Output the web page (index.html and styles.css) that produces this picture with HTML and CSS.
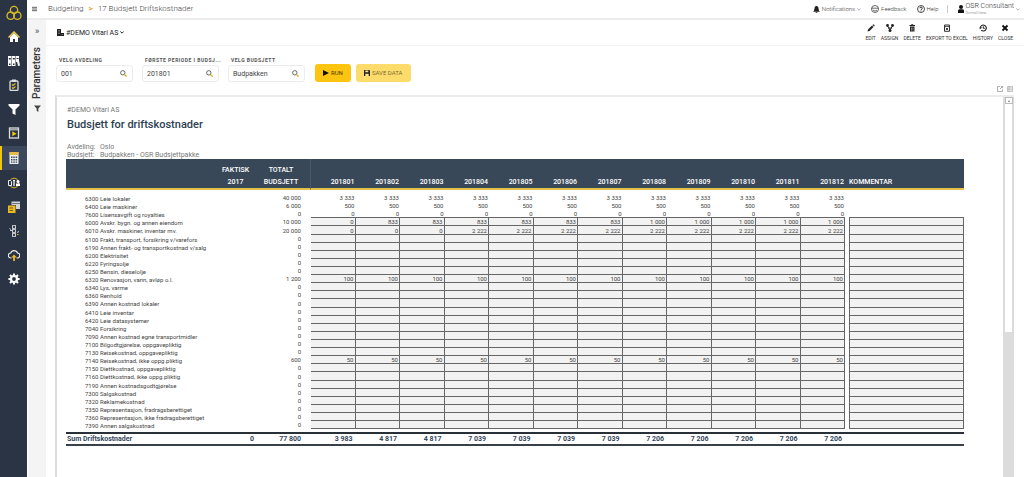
FILE: index.html
```html
<!DOCTYPE html>
<html lang="no">
<head>
<meta charset="utf-8">
<title>Budsjett for driftskostnader</title>
<link rel="stylesheet" href="styles.css">
</head>
<body>
<div class="app">
  <nav class="rail" aria-label="Main">
    <a class="rail-logo" href="#" aria-label="Start"><svg viewBox="0 0 24 24" width="16" height="16" fill="none" stroke="#d5b929" stroke-width="2"><circle cx="12" cy="7.500" r="5.500"/><circle cx="7" cy="16" r="5.500"/><circle cx="17" cy="16" r="5.500"/></svg></a>
    <a class="rail-item" href="#" aria-label="Home"><svg viewBox="0 0 12 12" width="12" height="12"><path d="M2 6l4-4 4 4v5H7V8H5v3H2z" fill="#fff"/><path d="M.5 6.500L6 1l5.500 5.500" fill="none" stroke="#f2c94c" stroke-width="1.500"/></svg></a>
    <a class="rail-item" href="#" aria-label="Archive"><svg viewBox="0 0 12 12" width="12" height="12" fill="#fff"><path d="M0 1h3.500v10H0zM4 1h3.500v10H4z"/><path d="M8 1.500l2-.5 2 9.500-2 .5z"/><path d="M8 1h3v6H8z"/><path d="M.8 3h2v1.500h-2zM4.800 3h2v1.500h-2zM8.500 3h2v1h-2zM1 8.500h1.500V10H1zM5 8.500h1.500V10H5z" fill="#2b3445"/></svg></a>
    <a class="rail-item" href="#" aria-label="Tasks"><svg viewBox="0 0 12 12" width="12" height="12" fill="none"><rect x="2" y="2" width="8" height="9.500" rx="1" stroke="#ddd" stroke-width="1.300"/><path d="M4 .5h4v2.500H4z" fill="#ddd"/><path d="M4 5.500l1 1 2.500-2M4 8.500l1 1 2.500-2" stroke="#d5b929" stroke-width="1.200"/></svg></a>
    <a class="rail-item" href="#" aria-label="Filter"><svg viewBox="0 0 12 12" width="12" height="12"><path d="M.5 1h11v1.500L7.500 6.500V12l-3-1.500v-4L.5 2.500z" fill="#fff"/></svg></a>
    <a class="rail-item" href="#" aria-label="Reports"><svg viewBox="0 0 12 12" width="12" height="12"><rect x="1.500" y="1" width="9" height="10" fill="none" stroke="#ddd" stroke-width="1.300"/><path d="M2 2.800h8" stroke="#ddd"/><path d="M4.300 4.300v5L8.500 6.800z" fill="#f0c808"/></svg></a>
    <a class="rail-item rail-item-active" href="#" aria-label="Budgeting"><svg viewBox="0 0 12 12" width="12" height="12"><path d="M1.500 0h9v12h-9z" fill="#eee"/><path d="M1.500 0h9v3h-9z" fill="#e5b94a"/><path d="M3 4.500h1.500V6H3zM5.300 4.500h1.500V6H5.300zM7.600 4.500h1.500V6H7.600zM3 7h1.500v1.500H3zM5.300 7h1.500v1.500H5.300zM7.600 7h1.500v1.500H7.600zM3 9.400h1.500v1.300H3zM5.300 9.400h1.500v1.300H5.300zM7.600 9.400h1.500v1.300H7.600z" fill="#39475a"/></svg></a>
    <a class="rail-item" href="#" aria-label="Collaboration"><svg viewBox="0 0 12 12" width="12" height="12"><circle cx="6" cy="6" r="4.800" fill="none" stroke="#d5b929" stroke-width="1"/><path d="M.5 3.500h2l1 1v4h-3z" fill="#2b3445" stroke="#fff" stroke-width=".9"/><path d="M6 3v6M5 3.500h2" stroke="#fff" stroke-width="1.200"/><path d="M8 6.500h4v2.500H8z" fill="#fff"/><circle cx="10" cy="4.500" r="1.500" fill="#fff"/></svg></a>
    <a class="rail-item" href="#" aria-label="Data"><svg viewBox="0 0 12 12" width="12" height="12"><path d="M3.500.5H12V8H8V4H3.500z" fill="#cfd3da"/><path d="M4 2.500h8" stroke="#2b3445" stroke-width=".6"/><path d="M0 4.500h7.500V12H0z" fill="#f0b91d"/><path d="M1.500 7h3.500M1.500 9.500h3.500" stroke="#2b3445" stroke-width=".7"/></svg></a>
    <a class="rail-item" href="#" aria-label="Workflow"><svg viewBox="0 0 12 12" width="12" height="12" fill="none" stroke="#c9ccd1"><rect x="4.500" y=".6" width="3" height="2.800"/><rect x="4.500" y="4.600" width="3" height="2.800"/><rect x="4.500" y="8.600" width="3" height="2.800"/><path d="M1.500 3.500l1.500 1M2 5.500h2M9 7.500l2-1M6 3.400v1.200M6 7.400v1.200"/><path d="M9 9.500h1.500" stroke="#d5b929"/></svg></a>
    <a class="rail-item" href="#" aria-label="Upload"><svg viewBox="0 0 12 12" width="12" height="12" fill="none"><path d="M3.500 9H3a2.500 2.500 0 0 1-.3-5A3.600 3.600 0 0 1 9.500 4 2.500 2.500 0 0 1 9 9h-.5" stroke="#eee" stroke-width="1.100"/><path d="M6 5.500L3.200 8.500h1.900V12h1.800V8.500h1.900z" fill="#f0b91d"/></svg></a>
    <a class="rail-item" href="#" aria-label="Settings"><svg viewBox="0 0 12 12" width="12" height="12" fill="none" stroke="#fff"><circle cx="6" cy="6" r="3" stroke-width="2.200"/><path d="M6 .4v1.800M6 9.800v1.800M.4 6h1.800M9.800 6h1.800M2 2l1.300 1.300M8.700 8.700L10 10M2 10l1.300-1.300M8.700 3.300L10 2" stroke-width="2"/></svg></a>
  </nav>

  <div class="body">
    <header class="topbar">
      <button class="plain menu" aria-label="Menu"><svg viewBox="0 0 6 6" width="5" height="6" stroke="#444" stroke-width="1"><path d="M0 1h6M0 3h6M0 5h6"/></svg></button>
      <div class="crumbs"><a href="#">Budgeting</a><span class="crumb-sep">&gt;</span><span>17 Budsjett Driftskostnader</span></div>
      <div class="account">
        <button class="plain"><svg viewBox="0 0 8 8" width="7" height="7"><path d="M4 0a2.200 2.200 0 0 1 2.200 2.400L6.800 5l1 1.500H.2L1.200 5l.6-2.600A2.200 2.200 0 0 1 4 0zM3 7h2v1H3z" fill="#222"/></svg>Notifications<svg viewBox="0 0 6 4" width="4" height="3"><path d="M.5.500L3 3 5.500.500" fill="none" stroke="#888"/></svg></button>
        <button class="plain feedback"><svg viewBox="0 0 8 8" width="8" height="8" fill="none" stroke="#444" stroke-width=".8"><circle cx="4" cy="4" r="3.500"/><path d="M.5 3.200h7M2 5c1 1.300 3 1.300 4 0"/></svg>Feedback</button>
        <button class="plain help"><svg viewBox="0 0 8 8" width="8" height="8" fill="none" stroke="#222" stroke-width=".8"><circle cx="4" cy="4" r="3.500"/><path d="M2.800 3.200c0-1.600 2.500-1.500 2.500 0 0 .8-1.200.8-1.200 1.700M4 5.500v.9" stroke-width="1"/></svg>Help</button>
        <button class="plain user"><svg viewBox="0 0 6 8" width="6" height="8" fill="#111"><circle cx="3" cy="2" r="2"/><path d="M0 8V5.500C0 4.500 1 4.200 3 4.200s3 .3 3 1.300V8z"/></svg><span class="user-text"><span>OSR Consultant</span><small>DemoVitara</small></span><svg viewBox="0 0 6 4" width="4" height="3"><path d="M.5.500L3 3 5.500.500" fill="none" stroke="#888"/></svg></button>
      </div>
    </header>

    <div class="workspace">
      <aside class="params">
        <button class="plain expand" aria-label="Expand">»</button>
        <span class="params-title">Parameters</span>
        <svg viewBox="0 0 8 8" width="7" height="7"><path d="M0 .5h8L5 4v4L3 6.500V4z" fill="#444"/></svg>
      </aside>

      <main class="main">
        <div class="toolbar">
          <button class="plain company"><svg viewBox="0 0 7 7" width="7" height="7" fill="#222"><path d="M0 0h4v4h3v3H0z"/><path d="M1 1.500h2M1 3h2M1 4.500h2M4.500 5.500H6" stroke="#aaa" stroke-width=".5"/></svg>#DEMO Vitari AS<svg viewBox="0 0 6 4" width="4" height="3"><path d="M.5.500L3 3 5.500.500" fill="none" stroke="#222" stroke-width="1.500"/></svg></button>
          <div class="actions">
            <button class="plain"><svg viewBox="0 0 8 8" width="8" height="8"><path d="M.5 7.500L1 5.500 5 1.500l1.500 1.500-4 4zM5.500 1l1-.8 1.300 1.300-.8 1z" fill="#222"/></svg>EDIT</button>
            <button class="plain"><svg viewBox="0 0 8 8" width="8" height="8" fill="#222"><circle cx="1.500" cy="1.500" r="1.400"/><circle cx="6.500" cy="1.500" r="1.400"/><circle cx="4" cy="6.400" r="1.500"/><path d="M1.500 2l2.500 4 2.500-4M2 4h4" fill="none" stroke="#222"/></svg>ASSIGN</button>
            <button class="plain"><svg viewBox="0 0 8 8" width="8" height="8"><path d="M2 2.500h4.500v5H2zM1.500 1h5.500v1H1.500zM3.200.3h2V1h-2z" fill="#222"/><path d="M3.500 3.500v3M5 3.500v3" stroke="#ccc" stroke-width=".6"/></svg>DELETE</button>
            <button class="plain"><svg viewBox="0 0 8 8" width="8" height="8" fill="none" stroke="#333"><path d="M1.500 1h5v6.300h-5z" stroke-width="1"/><path d="M2 2.400h4M2.800 3.800l2.400 2.400M5.200 3.800L2.800 6.200" stroke-width=".9"/></svg>EXPORT TO EXCEL</button>
            <button class="plain"><svg viewBox="0 0 8 8" width="8" height="8" fill="none" stroke="#222"><path d="M1.300 4A3 3 0 1 1 2.200 6.200" stroke-width="1.100"/><path d="M4.300 2.300V4.300h1.500M0 3.500l1.300 1.300L2.700 3.500" stroke-width="1"/></svg>HISTORY</button>
            <button class="plain"><svg viewBox="0 0 8 8" width="8" height="8"><path d="M1.500 1.500l5 5M6.500 1.500l-5 5" stroke="#111" stroke-width="1.800"/></svg>CLOSE</button>
          </div>
        </div>

        <form class="filters" onsubmit="return false">
          <div class="field"><label for="dep">VELG AVDELING</label><div class="box"><input id="dep" value="001"><svg viewBox="0 0 8 8" width="7" height="7" fill="none"><circle cx="3.200" cy="3.200" r="2.500" stroke="#555"/><path d="M5 5l2.500 2.500" stroke="#d9b21c" stroke-width="1.500"/></svg></div></div>
          <div class="field"><label for="per">FØRSTE PERIODE I BUDSJ...</label><div class="box"><input id="per" value="201801"><svg viewBox="0 0 8 8" width="7" height="7" fill="none"><circle cx="3.200" cy="3.200" r="2.500" stroke="#555"/><path d="M5 5l2.500 2.500" stroke="#d9b21c" stroke-width="1.500"/></svg></div></div>
          <div class="field"><label for="bud">VELG BUDSJETT</label><div class="box"><input id="bud" value="Budpakken"><svg viewBox="0 0 8 8" width="7" height="7" fill="none"><circle cx="3.200" cy="3.200" r="2.500" stroke="#555"/><path d="M5 5l2.500 2.500" stroke="#d9b21c" stroke-width="1.500"/></svg></div></div>
          <div class="buttons">
            <button class="btn run"><svg viewBox="0 0 6 6" width="6" height="6"><path d="M0 0l6 3-6 3z" fill="#111"/></svg>RUN</button>
            <button class="btn save"><svg viewBox="0 0 6 6" width="6" height="6"><path d="M0 0h5.500l.5.500V6H0z" fill="#222"/><path d="M1.300.5h3v1.700h-3zM1.300 3.800h3.400V6H1.300z" fill="#ffe07a"/></svg>SAVE DATA</button>
          </div>
        </form>

        <div class="view-tools">
          <button class="plain" aria-label="Full screen"><svg viewBox="0 0 6 6" width="6" height="6" fill="none" stroke="#999" stroke-width=".8"><path d="M3 .6H.5v5h5V3.500M3 3L5.500.5M3.800.5h1.800v1.800"/></svg></button>
          <button class="plain" aria-label="Grid"><svg viewBox="0 0 6 6" width="6" height="6" fill="none" stroke="#aaa" stroke-width=".7"><path d="M.5.500h5v5h-5zM.5 2h5M.5 3.800h5M2 .5v5"/></svg></button>
        </div>

        <div class="panel">
          <section class="report">
            <p class="firm">#DEMO Vitari AS</p>
            <h1>Budsjett for driftskostnader</h1>
            <dl class="meta"><dt>Avdeling:</dt><dd>Oslo</dd><dt>Budsjett:</dt><dd>Budpakken - OSR Budsjettpakke</dd></dl>
            <table class="grid">
              <colgroup><col class="c-name"><col class="c-actual"><col class="c-total"><col span="12"><col class="c-gap"><col class="c-note"></colgroup>
              <thead><tr id="head"><th></th><th class="mid">FAKTISK<br>2017</th><th class="mid tot">TOTALT<br>BUDSJETT</th></tr></thead>
              <tbody id="rows"></tbody>
              <tfoot><tr class="space"><td colspan="17"></td></tr><tr id="sum" class="sum"></tr></tfoot>
            </table>
          </section>
          <div class="scroll" aria-hidden="true"><span class="scroll-up"></span><span class="scroll-thumb"></span></div>
        </div>
      </main>
    </div>
  </div>
</div>
<script src="app.js"></script>
</body>
</html>
```
FILE: styles.css
```css
* { box-sizing: border-box; }
body { margin: 0; font: 7px/8px Roboto, "Liberation Sans", sans-serif; color: #444; background: #fff; }
a { color: inherit; text-decoration: none; }
svg { display: block; flex: none; }
.app { display: flex; height: 100vh; overflow: hidden; }
.plain { display: flex; align-items: center; gap: 2px; border: 0; padding: 0; background: none; font: inherit; color: inherit; white-space: nowrap; }

.rail { flex: none; width: 27px; background: #2b3445; display: flex; flex-direction: column; }
.rail-logo, .rail-item { display: flex; align-items: center; justify-content: center; height: 24px; flex: none; }
.rail-logo { height: 25px; }
.rail-item-active { margin: 1px 0; background: #3c485b; box-shadow: inset 2px 0 #f0c808; }

.body { flex: 1; min-width: 0; display: flex; flex-direction: column; }
.topbar { flex: none; display: flex; align-items: center; height: 20px; padding: 0 4px 0 5px; border-bottom: 2px solid #ececec; }
.menu { width: 16px; }
.crumbs { display: flex; gap: 5px; font-size: 8px; line-height: 10px; font-weight: 300; color: #444; }
.crumb-sep { color: #e0a52e; font-weight: bold; }
.account { margin-left: auto; display: flex; align-items: center; font-size: 6px; font-weight: 300; color: #333; }
.feedback { margin-left: 10px; }
.help { margin-left: 10px; padding-right: 8px; border-right: 1px solid #ccc; }
.user { margin-left: 10px; }
.user-text { display: flex; flex-direction: column; text-align: left; font-size: 7px; line-height: 7px; }
.user-text small { font-size: 4px; line-height: 5px; color: #777; }

.workspace { flex: 1; min-height: 0; display: flex; }
.params { flex: none; width: 18px; margin-left: 1px; background: #f4f4f4; display: flex; flex-direction: column; align-items: center; gap: 6px; }
.expand { font-size: 9px; height: 21px; }
.params-title { writing-mode: vertical-rl; transform: rotate(180deg); font-size: 10px; line-height: 12px; font-weight: 500; color: #333; }

.main { flex: 1; min-width: 0; display: flex; flex-direction: column; }
.toolbar { flex: none; height: 26px; display: flex; align-items: center; justify-content: space-between; padding: 0 11px; border-bottom: 1px solid #f4f4f4; }
.company { color: #222; }
.actions { display: flex; gap: 5px; align-items: flex-end; }
.actions .plain { flex-direction: column; gap: 3px; font-size: 5px; line-height: 6px; color: #333; }

.filters { flex: none; display: flex; align-items: flex-end; gap: 9px; padding: 10px 10px 0; }
.field { width: 77px; display: flex; flex-direction: column; }
.field label { font-size: 5px; line-height: 8px; font-weight: bold; letter-spacing: 0.1em; padding-left: 3px; white-space: nowrap; color: #555; }
.box { display: flex; align-items: center; height: 17px; margin-top: 1px; border: 1px solid #ececec; border-radius: 3px; padding: 0 5px 0 4px; }
.box input { flex: 1; min-width: 0; border: 0; padding: 0; outline: 0; background: none; font: inherit; color: #444; }
.buttons { display: flex; gap: 5px; margin-left: 1px; }
.btn { display: flex; align-items: center; justify-content: center; gap: 2px; height: 18px; border: 0; border-radius: 3px; padding: 0 8px; font: inherit; font-size: 6px; white-space: nowrap; }
.run { background: #fdc50f; color: #4a3a05; }
.save { background: #fddc6c; color: #7d6c30; }

.view-tools { flex: none; display: flex; justify-content: flex-end; gap: 4px; padding: 4px 11px 3px 0; }
.panel { flex: 1; min-height: 0; display: flex; margin: 0 10px 0 9px; border-top: 2px solid #ececec; border-left: 2px solid #dcdcdc; }
.report { flex: 1; min-width: 0; padding: 8px 39px 0 9px; }
.firm { margin: 0; padding-left: 1px; font-size: 7px; line-height: 10px; color: #777; }
h1 { margin: 3px 0 11px; padding-left: 1px; font-size: 11px; line-height: 14px; font-weight: 500; color: #2c3e52; }
.meta { margin: 0; padding-left: 1px; display: grid; grid-template-columns: 33px 1fr; line-height: 8px; color: #777; font-size: 7px; }
.meta dd { margin: 0; }

.grid { width: 100%; table-layout: fixed; border-collapse: separate; border-spacing: 0; font-size: 6px; line-height: 7px; text-align: right; color: #444; }
.c-name { width: 149px; }
.c-actual { width: 42px; }
.c-total { width: 54px; }
.c-gap { width: 4px; }
.c-note { width: 115px; }
.grid th, .grid td { padding: 0; white-space: nowrap; }
.grid thead th { padding: 5px 1px 0 0; vertical-align: bottom; text-align: right; font-size: 7px; line-height: 12px; font-weight: 500; color: #fff; background: #394859; border-bottom: 2px solid #e5c14a; }
.grid thead .mid { text-align: center; }
.grid thead .tot { padding-right: 5px; border-right: 1px solid #4a5868; }
.grid thead .note { text-align: left; }
.lead td { height: 4px; }
.line td, .line th { height: 8px; }
.line:nth-child(9n+6) td { height: 9px; }
.line th { text-align: left; font-weight: 400; padding-left: 19px; }
.line .num { padding-right: 1px; border-bottom: 1px solid transparent; }
.line .total { padding-right: 10px; }
.line .edge { border-bottom: 1px solid #666; }
.line .open { background: #f2f2f2; border-bottom: 1px solid #666; border-right: 1px solid #666; }
.line .open.note { border-left: 1px solid #666; }
.space td { height: 3px; }
.sum td, .sum th { height: 14px; border-top: 2px solid #2a3038; border-bottom: 2px solid #3a4048; font-size: 7px; line-height: 10px; font-weight: 700; color: #34465a; }
.sum th { text-align: left; padding-left: 1px; }
.sum td { padding-right: 3px; }
.sum .total { padding-right: 10px; }

.scroll { flex: none; width: 11px; background: #dcdcdc; display: flex; flex-direction: column; align-items: center; }
.scroll-up { width: 8px; height: 7px; border: 1px solid #bbb; background: #fff; display: flex; align-items: center; justify-content: center; }
.scroll-up::before { content: ""; border: 1px solid transparent; border-top: 0; border-bottom: 2px solid #777; }
.scroll-thumb { width: 7px; height: 60%; background: #fff; }
```
FILE: app.js
```js
const repeat = v => Array(12).fill(v);
const accounts = [
  ["6300 Leie lokaler", "40 000", repeat("3 333"), true],
  ["6400 Leie maskiner", "6 000", repeat("500"), true],
  ["7600 Lisensavgift og royalties", "0", repeat("0"), true],
  ["6000 Avskr. bygn. og annen eiendom", "10 000", ["0", "833", "833", "833", "833", "833", "833", "1 000", "1 000", "1 000", "1 000", "1 000"]],
  ["6010 Avskr. maskiner, inventar mv.", "20 000", ["0", "0", "0", ...Array(9).fill("2 222")]],
  ["6100 Frakt, transport, forsikring v/varefors"],
  ["6190 Annen frakt- og transportkostnad v/salg"],
  ["6200 Elektrisitet"],
  ["6220 Fyringsolje"],
  ["6250 Bensin, dieselolje"],
  ["6320 Renovasjon, vann, avløp o.l.", "1 200", repeat("100")],
  ["6340 Lys, varme"],
  ["6360 Renhold"],
  ["6390 Annen kostnad lokaler"],
  ["6410 Leie inventar"],
  ["6420 Leie datasystemer"],
  ["7040 Forsikring"],
  ["7090 Annen kostnad egne transportmidler"],
  ["7100 Bilgodtgjørelse, oppgavepliktig"],
  ["7130 Reisekostnad, oppgavepliktig"],
  ["7140 Reisekostnad, ikke oppg.pliktig", "600", repeat("50")],
  ["7150 Diettkostnad, oppgavepliktig"],
  ["7160 Diettkostnad, ikke oppg.pliktig"],
  ["7190 Annen kostnadsgodtgjørelse"],
  ["7300 Salgskostnad"],
  ["7320 Reklamekostnad"],
  ["7350 Representasjon, fradragsberettiget"],
  ["7360 Representasjon, ikke fradragsberettiget"],
  ["7390 Annen salgskostnad"]
];
const sums = ["3 983", "4 817", "4 817", "7 039", "7 039", "7 039", "7 039", "7 206", "7 206", "7 206", "7 206", "7 206"];

let head = "";
for (let m = 1; m <= 12; m++) head += `<th>2018${String(m).padStart(2, "0")}</th>`;
document.getElementById("head").insertAdjacentHTML("beforeend", head + '<th></th><th class="note">KOMMENTAR</th>');

document.getElementById("rows").innerHTML = '<tr class="lead"><td colspan="17"></td></tr>' +
  accounts.map(([name, total = "0", months = repeat(""), locked], i) => {
    const state = !locked ? "open" : i === 2 ? "edge" : "";
    return `<tr class="line"><th scope="row">${name}</th><td></td><td class="num total">${total}</td>` +
      months.map(v => `<td class="num ${state}">${v}</td>`).join("") +
      `<td></td><td class="note ${state}"></td></tr>`;
  }).join("");

document.getElementById("sum").innerHTML = '<th scope="row">Sum Driftskostnader</th><td>0</td><td class="total">77 800</td>' +
  sums.map(v => `<td>${v}</td>`).join("") + "<td></td><td></td>";
```
